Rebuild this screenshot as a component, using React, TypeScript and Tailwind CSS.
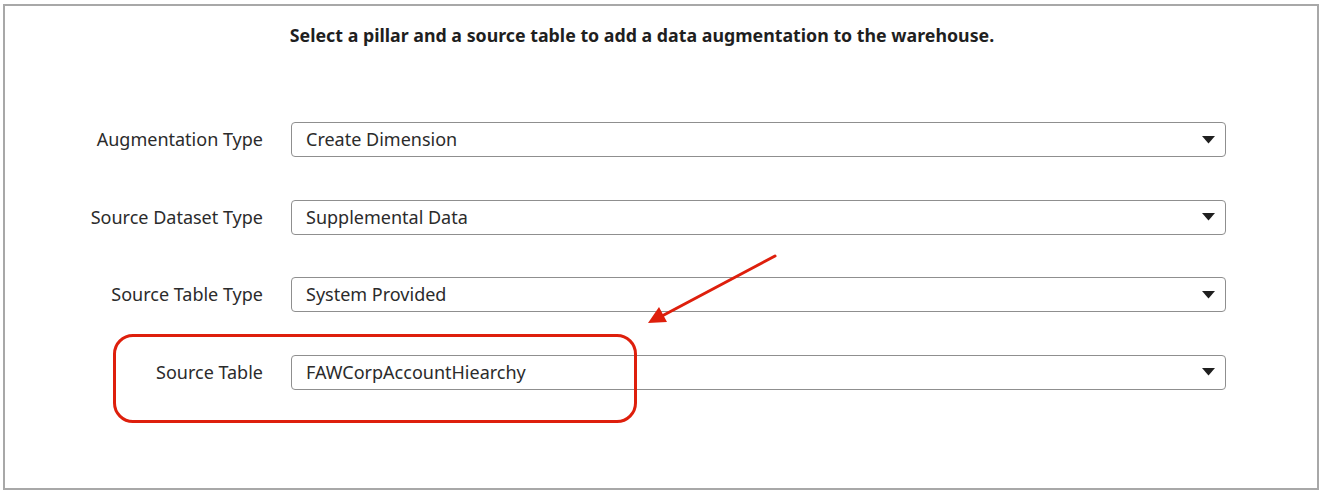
const rows = [
  { label: 'Augmentation Type', value: 'Create Dimension' },
  { label: 'Source Dataset Type', value: 'Supplemental Data' },
  { label: 'Source Table Type', value: 'System Provided' },
  { label: 'Source Table', value: 'FAWCorpAccountHiearchy', highlight: true },
]

function SelectBox({ value }: { value: string }) {
  return (
    <div className="flex h-[35px] w-[935px] items-center justify-between rounded-[4px] border border-[#8f8f8f] bg-white pl-[14px] pr-[10px]">
      <span className="text-[18px] text-[#2b2b2b]">{value}</span>
      <svg width="13" height="8" viewBox="0 0 13 8" className="shrink-0">
        <path d="M0 0 L13 0 L6.5 7.5 Z" fill="#1f1f1f" />
      </svg>
    </div>
  )
}

export default function App() {
  return (
    <div
      className="relative h-[491px] w-[1322px] bg-white px-[3px] pt-[4px]"
      style={{ fontFamily: '"Noto Sans", "Open Sans", sans-serif' }}
    >
      <div className="h-[486px] border-2 border-[#a8a8a8]">
        <div className="flex justify-center pr-[38px] pt-[17px]">
          <h1 className="text-[17.8px] font-bold leading-[24px] text-[#1f1f1f]">
            Select a pillar and a source table to add a data augmentation to the warehouse.
          </h1>
        </div>

        <div className="mt-[75px] flex flex-col gap-[42.6px]">
          {rows.map(row => (
            <div key={row.label} className="relative flex items-center gap-[28px]">
              <div className="w-[258px] text-right text-[18px] text-[#2b2b2b]">
                {row.label}
              </div>
              <SelectBox value={row.value} />
              {row.highlight && (
                <div className="pointer-events-none absolute left-[108px] top-[-21px] h-[89px] w-[524px] rounded-[20px] border-[3px] border-[#de1f0c]" />
              )}
            </div>
          ))}
        </div>
      </div>

      <svg
        className="pointer-events-none absolute left-0 top-0"
        width="1322"
        height="491"
        viewBox="0 0 1322 491"
      >
        <line x1="775" y1="256" x2="662" y2="316" stroke="#de1f0c" strokeWidth="3" strokeLinecap="round" />
        <path d="M648 323 L659 307 L667 322 Z" fill="#de1f0c" />
      </svg>
    </div>
  )
}
